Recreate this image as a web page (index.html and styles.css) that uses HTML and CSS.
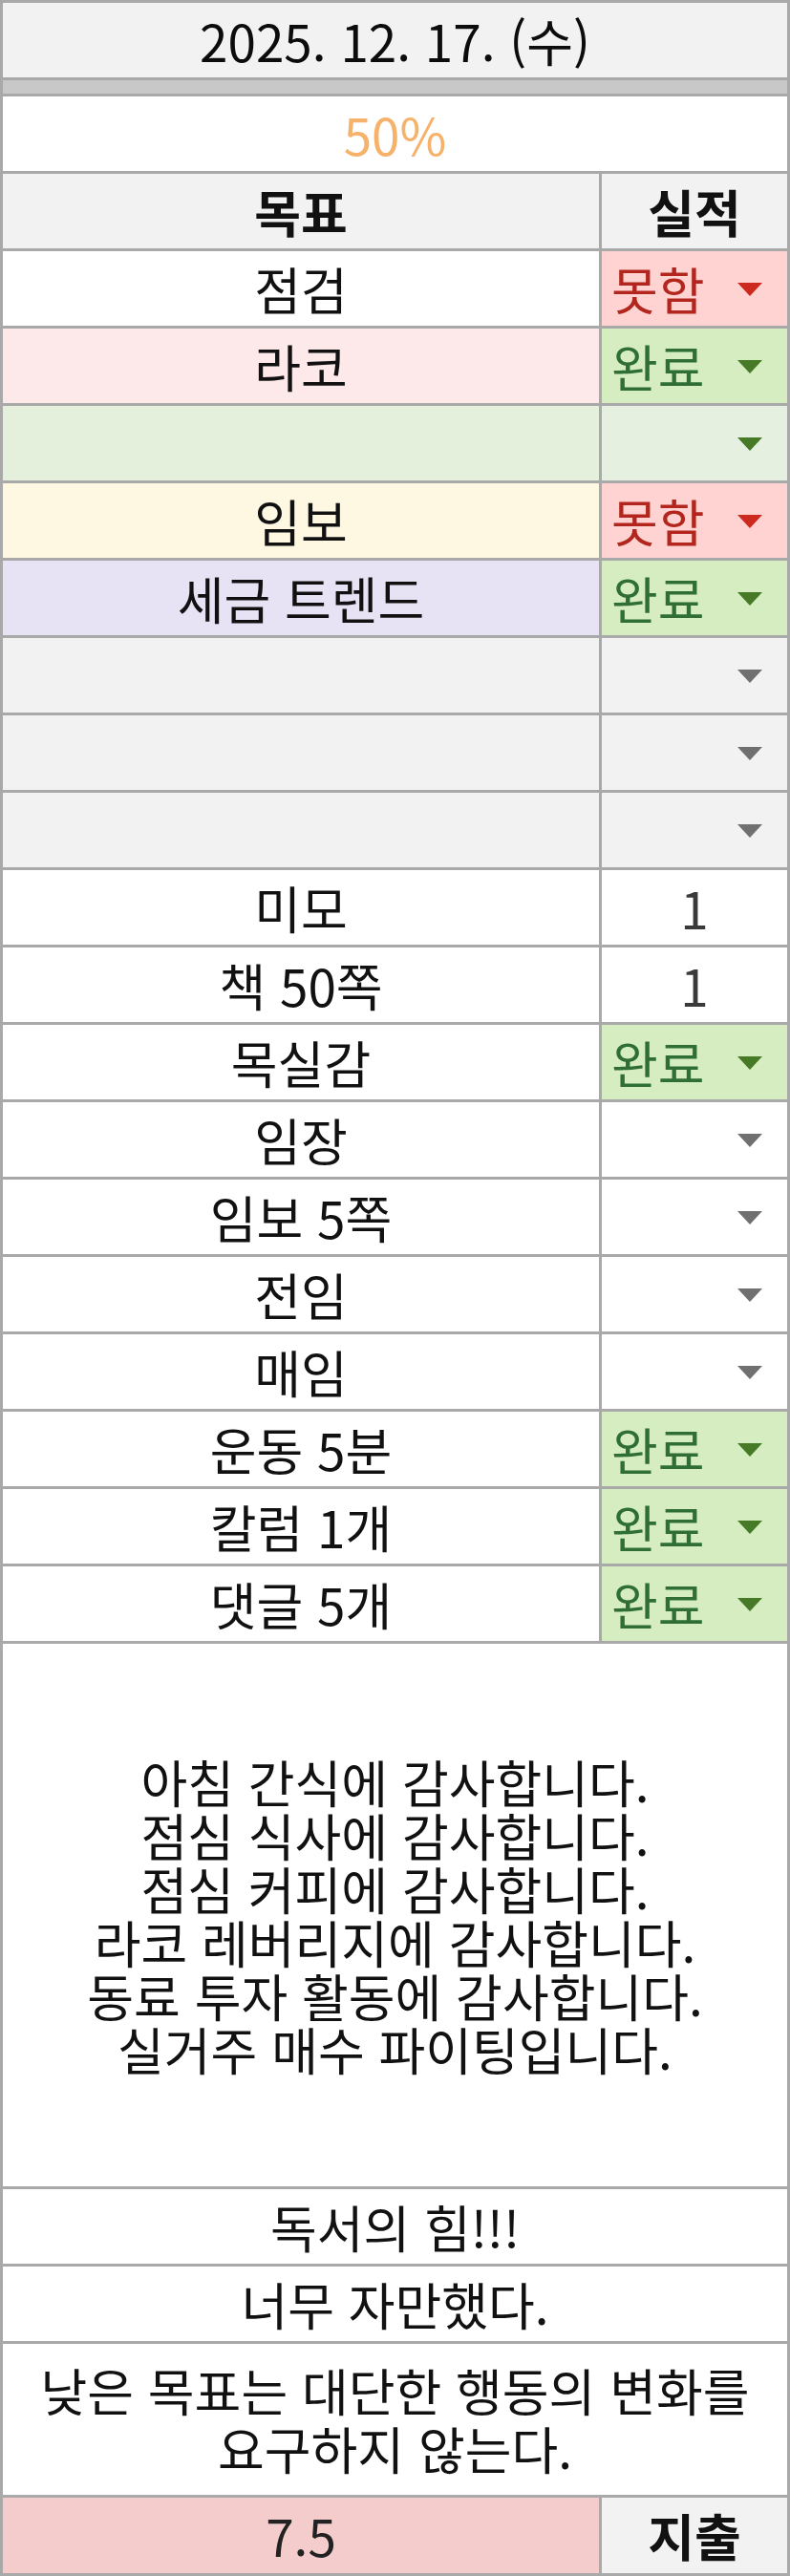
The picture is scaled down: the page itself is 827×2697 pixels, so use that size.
FILE: index.html
```html
<!DOCTYPE html>
<html lang="ko">
<head>
<meta charset="utf-8">
<title>2025. 12. 17. (수)</title>
<link rel="stylesheet" href="styles.css">
</head>
<body>
<div class="sheet">
  <div class="cell span date">2025. 12. 17. (수)</div>
  <div class="cell span band"></div>
  <div class="cell span pct">50%</div>

  <div class="cell head">목표</div>
  <div class="cell head">실적</div>

  <div class="cell goal">점검</div>
  <div class="cell res bad"><span>못함</span><i class="arr red"></i></div>

  <div class="cell goal pink">라코</div>
  <div class="cell res ok"><span>완료</span><i class="arr green"></i></div>

  <div class="cell goal mint"></div>
  <div class="cell res mint2"><span></span><i class="arr green"></i></div>

  <div class="cell goal cream">임보</div>
  <div class="cell res bad"><span>못함</span><i class="arr red"></i></div>

  <div class="cell goal lav">세금 트렌드</div>
  <div class="cell res ok"><span>완료</span><i class="arr green"></i></div>

  <div class="cell goal grey"></div>
  <div class="cell res grey"><span></span><i class="arr gray"></i></div>
  <div class="cell goal grey"></div>
  <div class="cell res grey"><span></span><i class="arr gray"></i></div>
  <div class="cell goal grey"></div>
  <div class="cell res grey"><span></span><i class="arr gray"></i></div>

  <div class="cell goal">미모</div>
  <div class="cell num">1</div>

  <div class="cell goal">책 50쪽</div>
  <div class="cell num">1</div>

  <div class="cell goal">목실감</div>
  <div class="cell res ok"><span>완료</span><i class="arr green"></i></div>

  <div class="cell goal">임장</div>
  <div class="cell res"><span></span><i class="arr gray"></i></div>

  <div class="cell goal">임보 5쪽</div>
  <div class="cell res"><span></span><i class="arr gray"></i></div>

  <div class="cell goal">전임</div>
  <div class="cell res"><span></span><i class="arr gray"></i></div>

  <div class="cell goal">매임</div>
  <div class="cell res"><span></span><i class="arr gray"></i></div>

  <div class="cell goal">운동 5분</div>
  <div class="cell res ok"><span>완료</span><i class="arr green"></i></div>

  <div class="cell goal">칼럼 1개</div>
  <div class="cell res ok"><span>완료</span><i class="arr green"></i></div>

  <div class="cell goal">댓글 5개</div>
  <div class="cell res ok"><span>완료</span><i class="arr green"></i></div>

  <div class="cell span thanks">
    <p>아침 간식에 감사합니다.<br>점심 식사에 감사합니다.<br>점심 커피에 감사합니다.<br>라코 레버리지에 감사합니다.<br>동료 투자 활동에 감사합니다.<br>실거주 매수 파이팅입니다.</p>
  </div>

  <div class="cell span note">독서의 힘!!!</div>
  <div class="cell span note">너무 자만했다.</div>
  <div class="cell span note tall"><p>낮은 목표는 대단한 행동의 변화를<br>요구하지 않는다.</p></div>

  <div class="cell score">7.5</div>
  <div class="cell head">지출</div>
</div>
</body>
</html>
```

FILE: styles.css
```css
html, body {
  margin: 0;
  padding: 0;
  background: #ffffff;
}

.sheet {
  width: 827px;
  box-sizing: border-box;
  padding: 3px;
  background: #a9a9a9;
  display: grid;
  grid-template-columns: 624px 194px;
  grid-template-rows: 78px 14px 78px 78px repeat(18, 78px) 568px 78px 78px 158px 79px;
  gap: 3px;
  font-family: "Noto Sans CJK KR", "Noto Sans", sans-serif;
  font-size: 53px;
  color: #111111;
}

.cell {
  background: #ffffff;
  display: flex;
  align-items: center;
  justify-content: center;
  line-height: 1.15;
  white-space: nowrap;
  overflow: hidden;
}

.span {
  grid-column: 1 / 3;
}

.date {
  background: #f2f2f2;
  color: #0c0c0c;
}

.band {
  background: #c8c8c8;
}

.pct {
  color: #f6b26b;
}

.head {
  background: #f2f2f2;
  font-weight: 700;
}

.pink { background: #fde9e9; }
.mint { background: #e4f0dc; }
.mint2 { background: #e6f0e0; }
.cream { background: #fef8e3; }
.lav { background: #e7e3f4; }
.grey { background: #f2f2f2; }

.res {
  justify-content: space-between;
  padding: 0 26px 0 10px;
}

.bad {
  background: #ffd3d1;
  color: #b3261e;
}

.ok {
  background: #d5edc0;
  color: #2f6f33;
}

.arr {
  display: block;
  width: 0;
  height: 0;
  border-left: 13px solid transparent;
  border-right: 13px solid transparent;
  border-top: 14px solid #6f6f6f;
  margin-top: 2px;
}

.arr.red { border-top-color: #cc2a1f; }
.arr.green { border-top-color: #467a26; }
.arr.gray { border-top-color: #707070; }

.num {
  color: #3a3a3a;
}

.thanks,
.tall {
  white-space: normal;
}

.thanks p,
.tall p {
  margin: 0;
  text-align: center;
}

.thanks p {
  line-height: 56px;
}

.tall p {
  line-height: 61px;
}

.score {
  background: #f4cccc;
  color: #222222;
}
```
